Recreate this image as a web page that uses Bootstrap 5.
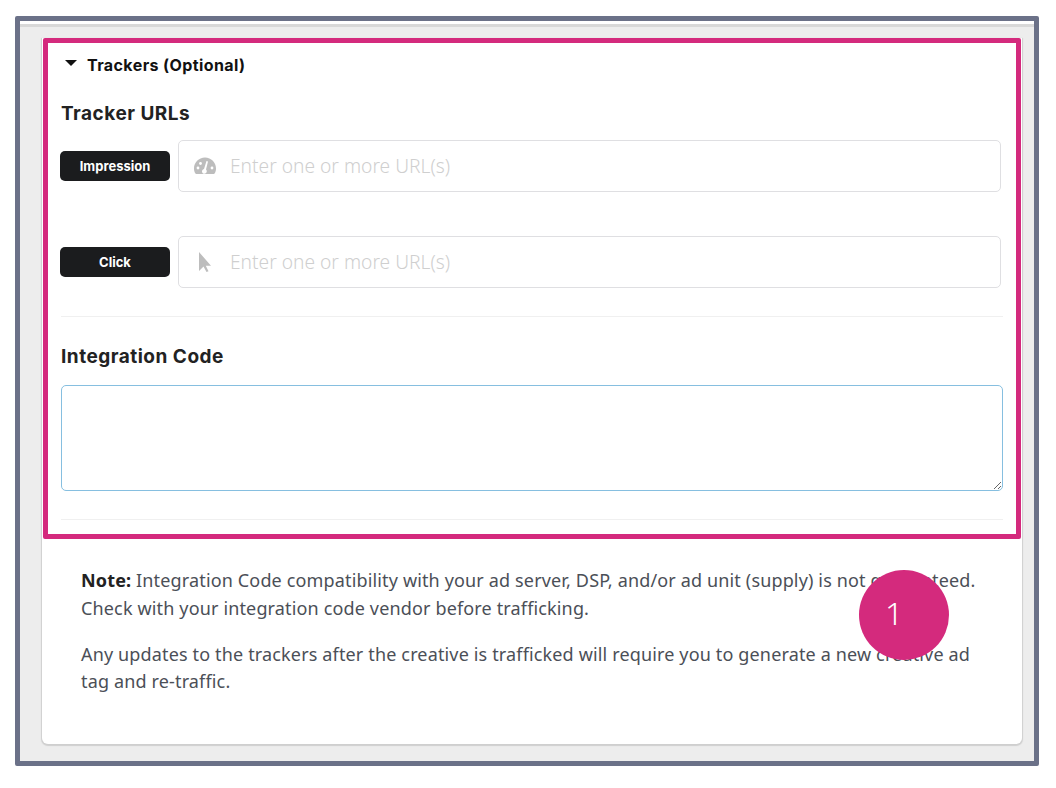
<!DOCTYPE html>
<html lang="en">
<head>
<meta charset="utf-8">
<title>Trackers</title>
<link href="https://cdn.jsdelivr.net/npm/bootstrap@5.3.0/dist/css/bootstrap.min.css" rel="stylesheet">
<style>
html,body{background:#fff;height:788px;overflow:hidden}
body{padding:16px 17px 0 15px;font-family:"Noto Sans",sans-serif;color:#444}
.shot-frame{height:750px;border:5px solid #6b7188;border-radius:2px;background:#ededed;padding:17px 12px 0 22px;box-shadow:inset 0 3px 0 #fff,inset 0 6px 0 #d8d8d8}
.sheet{height:706px;background:#fff;border-radius:0 0 6px 6px;box-shadow:0 1px 1px 1px #cfcfcf;position:relative}
.pink-box{height:501px;margin:0 1px;border:5px solid #d42a7d;border-radius:2px;padding:12px 13px 0 13px;background:#fff}
.toggle-line{font:700 16px/20px Inter,sans-serif;letter-spacing:.4px;color:#111;gap:10px;padding-left:4px}
.caret-mark{width:0;height:0;border:6px solid transparent;border-top:6px solid #111;border-bottom:0;margin-top:-4px}
.sec-title{font:700 19px/26px Inter,sans-serif;letter-spacing:.5px;color:#222;margin:0}
.tag-pill{width:110px;height:30px;flex:none;margin-left:-1px;background:#1b1c1e;color:#fff;border-radius:5px;font:700 13px/30px Inter,sans-serif;text-align:center}
.url-box{height:52px;border:1px solid #dfdfe2;border-radius:5px;padding-left:14px;gap:13px;color:#cfcfcf;font:300 19.200px/50px "Noto Sans",sans-serif;background:#fff}
.url-box svg{flex:none}
.url-gap{gap:8px;padding-right:2px}
.rule-line{height:1px;background:#f0f0f0;border:0;opacity:1;margin:0}
.code-box{height:106px;border:1px solid #86bfe0;border-radius:5px;resize:both;width:100%;display:block;outline:0}
.note-area{padding:28px 38px 0 39px;font-size:18px;letter-spacing:.15px;line-height:27.500px;color:#4b4f57}
.note-area p{margin:0 0 18.500px}
.note-area b{color:#222}
.step-dot{position:absolute;left:817px;top:532px;width:90px;height:90px;border-radius:50%;background:#d42a7d;color:#fff;font:300 32px/86px "Noto Sans",sans-serif;padding-left:26px}
</style>
</head>
<body>
<div class="shot-frame">
  <div class="sheet">
    <section class="pink-box">
      <div class="toggle-line d-flex align-items-center"><span class="caret-mark"></span><span>Trackers (Optional)</span></div>
      <h5 class="sec-title" style="margin-top:26px;margin-bottom:13px">Tracker URLs</h5>
      <div class="d-flex align-items-center url-gap" style="margin-bottom:44px">
        <span class="tag-pill">Impression</span>
        <div class="url-box d-flex align-items-center flex-grow-1">
          <svg width="24" height="20" viewBox="0 0 24 20"><path fill="#bdbdbd" d="M12 1.500C5.700 1.500 1 6.600 1 12.500c0 2 .5 3.700 1.400 5 .2.3.5.5.9.5h17.400c.4 0 .7-.2.9-.5.9-1.300 1.400-3 1.400-5 0-5.900-4.700-11-11-11z"/><path fill="#fff" d="M13.500 5 11 13a2.400 2.400 0 1 0 2 .6L15 5.500z"/><circle cx="5" cy="12" r="1.400" fill="#fff"/><circle cx="7.500" cy="7.500" r="1.400" fill="#fff"/><circle cx="19" cy="12" r="1.400" fill="#fff"/></svg>
          <span>Enter one or more URL(s)</span>
        </div>
      </div>
      <div class="d-flex align-items-center url-gap" style="margin-bottom:28px">
        <span class="tag-pill">Click</span>
        <div class="url-box d-flex align-items-center flex-grow-1">
          <svg width="24" height="22" viewBox="0 0 24 22"><path fill="#bdbdbd" d="M6 1v19l4.500-4.500 3 5.500 2-.8-2.700-5.400H18z"/></svg>
          <span>Enter one or more URL(s)</span>
        </div>
      </div>
      <hr class="rule-line">
      <h5 class="sec-title" style="margin-top:27px;margin-bottom:15px">Integration Code</h5>
      <textarea class="code-box"></textarea>
      <hr class="rule-line" style="margin-top:28px">
    </section>
    <div class="note-area">
      <p><b>Note:</b> Integration Code compatibility with your ad server, DSP, and/or ad unit (supply) is not guaranteed. Check with your integration code vendor before trafficking.</p>
      <p>Any updates to the trackers after the creative is trafficked will require you to generate a new creative ad tag and re-traffic.</p>
    </div>
    <span class="step-dot">1</span>
  </div>
</div>
<script src="https://cdn.jsdelivr.net/npm/bootstrap@5.3.0/dist/js/bootstrap.bundle.min.js"></script>
</body>
</html>
